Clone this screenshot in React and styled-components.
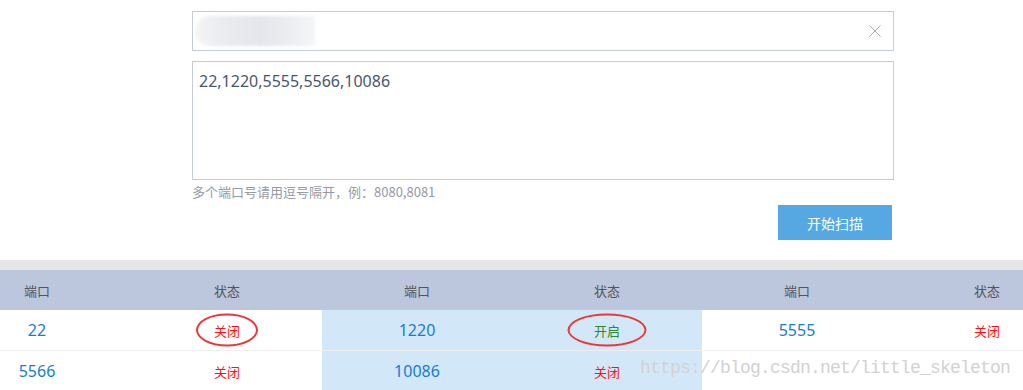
import React from "react";
import styled, { createGlobalStyle } from "styled-components";

const GlobalStyle = createGlobalStyle`
body {
  margin: 0;
  background: #fff;
  font-family: "Noto Sans", "Noto Sans CJK SC", sans-serif;
  overflow: hidden;
}
`
const Page = styled.div`
width: 1023px;
height: 390px;
overflow: hidden;
position: relative;
`
const Form = styled.div`
width: 702px;
margin-left: 192px;
padding-top: 11px;
display: flex;
flex-direction: column;
`
const InputBox = styled.div`
height: 40px;
box-sizing: border-box;
border: 1px solid #c5ccd9;
display: flex;
align-items: center;
justify-content: space-between;
padding: 0 12px 0 2px;
`
const Blurred = styled.span`
width: 120px;
height: 30px;
border-radius: 15px 0 0 15px;
background: linear-gradient(90deg, #f3f4f6 0%, #e9ebef 25%, #e4e6eb 55%, #eceef1 80%, #f5f6f7 100%);
filter: blur(1.5px);
`
const TextArea = styled.div`
margin-top: 10px;
height: 119px;
box-sizing: border-box;
border: 1px solid #c5ccd9;
padding: 9px 6px;
font-size: 16px;
line-height: 20px;
color: #4a5670;
`
const Hint = styled.div`
margin-top: 2px;
font-size: 13px;
line-height: 20px;
color: #959aa3;
font-family: "Noto Sans CJK SC", sans-serif;
`
const ScanButton = styled.button`
align-self: flex-end;
margin: 3px 2px 20px 0;
width: 114px;
height: 35px;
border: none;
background: #55a8e2;
color: #fff;
font-size: 14px;
font-family: "Noto Sans CJK SC", sans-serif;
`
const Band = styled.div`
height: 10px;
background: #e6e6e6;
`
const TableWrap = styled.div`
position: relative;
margin-left: -58px;
width: 1140px;
`
const Row = styled.div`
display: grid;
grid-template-columns: repeat(6, 190px);
height: ${p => p.$head ? '40px' : '41px'};
background: ${p => p.$head ? '#bcc6dd' : 'transparent'};
border-bottom: ${p => p.$head ? 'none' : '1px solid #eeeeee'};
box-sizing: border-box;
`
const Cell = styled.div`
display: flex;
align-items: center;
justify-content: center;
background: ${p => p.$mid ? '#d2e8f8' : 'transparent'};
`
const HeadText = styled.span`
font-size: 13px;
color: #555;
font-family: "Noto Sans CJK SC", sans-serif;
`
const Port = styled.span`
font-size: 16px;
color: #1a7bd3;
`
const Status = styled.span`
position: relative;
font-size: 13px;
font-family: "Noto Sans CJK SC", sans-serif;
color: ${p => p.$open ? '#2b8a2b' : '#ff1010'};
`
const Ring = styled.span`
position: absolute;
left: 50%;
top: 50%;
width: ${p => p.$w}px;
height: 33px;
transform: translate(-50%, -50%);
box-sizing: border-box;
border: 2.5px solid #e8383a;
border-radius: 50%;
`
const Watermark = styled.div`
position: absolute;
left: 698px;
top: 88px;
font-family: "Liberation Mono", monospace;
font-size: 18px;
letter-spacing: -0.8px;
color: #d2d2d2;
white-space: nowrap;
`

const rows = [
  [{ port: 22, open: false, ring: 62 }, { port: 1220, open: true, ring: 79 }, { port: 5555, open: false }],
  [{ port: 5566, open: false }, { port: 10086, open: false }, { port: null }],
];

const CloseIcon = () => (
  <svg width="12" height="12" viewBox="0 0 12 12">
    <path d="M0.5 0.5 L11.5 11.5 M11.5 0.5 L0.5 11.5" stroke="#a9a9a9" strokeWidth="1" fill="none" />
  </svg>
);

const App = () => {
  return (
    <Page>
      <GlobalStyle />
      <Form>
        <InputBox>
          <Blurred />
          <CloseIcon />
        </InputBox>
        <TextArea>22,1220,5555,5566,10086</TextArea>
        <Hint>多个端口号请用逗号隔开，例：8080,8081</Hint>
        <ScanButton>开始扫描</ScanButton>
      </Form>
      <Band />
      <TableWrap>
        <Row $head>
          {[0, 1, 2].map(i => (
            <React.Fragment key={i}>
              <Cell><HeadText>端口</HeadText></Cell>
              <Cell><HeadText>状态</HeadText></Cell>
            </React.Fragment>
          ))}
        </Row>
        {rows.map((r, ri) => (
          <Row key={ri}>
            {r.map((c, ci) => (
              <React.Fragment key={ci}>
                <Cell $mid={ci === 1}>{c.port && <Port>{c.port}</Port>}</Cell>
                <Cell $mid={ci === 1}>
                  {c.port && (
                    <Status $open={c.open}>
                      {c.open ? '开启' : '关闭'}
                      {c.ring && <Ring $w={c.ring} />}
                    </Status>
                  )}
                </Cell>
              </React.Fragment>
            ))}
          </Row>
        ))}
        <Watermark>https://blog.csdn.net/little_skeleton</Watermark>
      </TableWrap>
    </Page>
  );
}
export default App;
